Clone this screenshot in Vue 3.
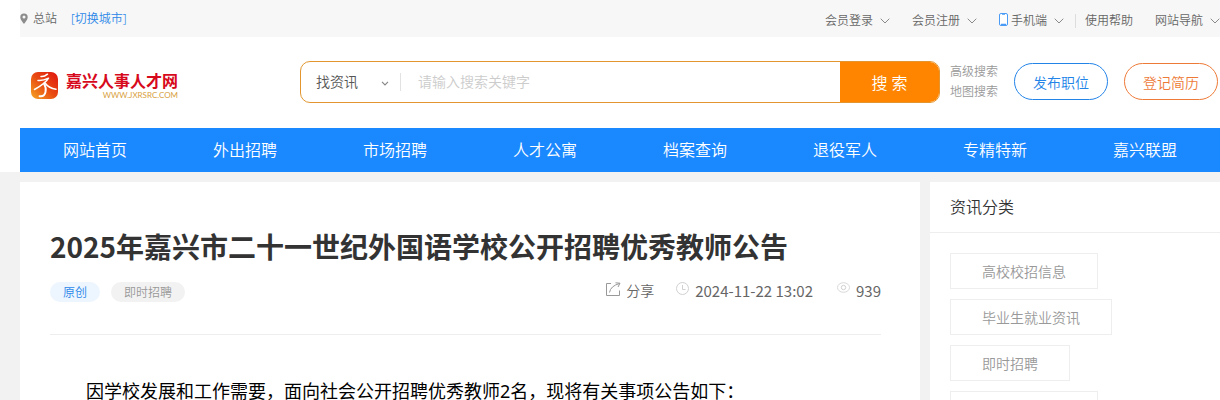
<template>
  <div class="page">
    <div class="top-area">
      <div class="topbar">
        <div class="site">
          <svg class="pin" width="8" height="11" viewBox="0 0 8 11">
            <path fill="#8c8c8c" fill-rule="evenodd" d="M4 0.5a3.7 3.7 0 0 0-3.7 3.7C0.3 6.8 4 10.8 4 10.8S7.7 6.8 7.7 4.2A3.7 3.7 0 0 0 4 0.5zM4 2.6a1.5 1.5 0 1 1 0 3 1.5 1.5 0 0 1 0-3z" />
          </svg>
          <span>总站</span>
          <a href="#" class="switch">[切换城市]</a>
        </div>
        <div class="links">
          <a v-for="item in topLinks" :key="item.name" href="#" :class="item.type">
            <svg v-if="item.type === 'phone'" class="phone-icon" width="9" height="13" viewBox="0 0 9 13">
              <rect x="0.5" y="0.5" width="8" height="12" rx="1.5" fill="#fff" stroke="#4a9bf5" />
              <path d="M3 1h3M2 11.5h5" stroke="#4a9bf5" stroke-width="1.5" />
            </svg>
            {{ item.name }}
            <svg v-if="item.arrow" class="arrow" width="10" height="6" viewBox="0 0 10 6">
              <path d="M0.7 0.7L5 5L9.3 0.7" fill="none" stroke="#8a8a8a" />
            </svg>
          </a>
        </div>
      </div>

      <header class="header">
        <a href="#" class="logo">
          <svg width="27" height="27" viewBox="0 0 27 27">
            <defs>
              <linearGradient id="logoBg" x1="1" y1="0" x2="0" y2="1">
                <stop offset="0" stop-color="#e0140f" />
                <stop offset="0.5" stop-color="#e84a12" />
                <stop offset="1" stop-color="#f6a623" />
              </linearGradient>
            </defs>
            <rect width="27" height="27" rx="7" fill="url(#logoBg)" />
            <g fill="none" stroke="#fff" stroke-linecap="round" stroke-linejoin="round">
              <path d="M10 4.5Q13 5 16.5 2.2" stroke-width="1.5" />
              <path d="M7 8.5Q12 9 17.5 6.2Q14.5 11.5 3.5 17.5" stroke-width="1.5" />
              <path d="M13 11.5Q15.5 16 14.5 20Q13.5 25 8.5 24.2" stroke-width="1.9" />
              <path d="M14 11Q18 16.5 25 17.2" stroke-width="1.6" />
            </g>
          </svg>
          <span class="logo-text">
            <strong>嘉兴人事人才网</strong>
            <small>WWW.JXRSRC.COM</small>
          </span>
        </a>

        <form class="search" @submit.prevent>
          <div class="select-box">
            <select v-model="searchType" aria-label="搜索类型">
              <option>找资讯</option>
            </select>
            <svg class="select-arrow" width="8" height="5" viewBox="0 0 8 5">
              <path d="M1 0.8L4 3.8L7 0.8" fill="none" stroke="#888" stroke-width="1.2" />
            </svg>
          </div>
          <input v-model="keyword" type="text" placeholder="请输入搜索关键字" aria-label="请输入搜索关键字" />
          <button type="submit">搜 索</button>
        </form>

        <div class="more">
          <a href="#">高级搜索</a>
          <a href="#">地图搜索</a>
        </div>
        <div class="actions">
          <button type="button" class="post">发布职位</button>
          <button type="button" class="resume">登记简历</button>
        </div>
      </header>

      <nav class="nav">
        <a v-for="name in navs" :key="name" href="#">{{ name }}</a>
      </nav>
    </div>

    <main class="main">
      <article class="article">
        <h1>2025年嘉兴市二十一世纪外国语学校公开招聘优秀教师公告</h1>
        <div class="info">
          <div class="tags">
            <span class="tag original">原创</span>
            <span class="tag">即时招聘</span>
          </div>
          <div class="meta">
            <a href="#" class="share">
              <svg width="15" height="15" viewBox="0 0 15 15">
                <path d="M5 1.5H0.5V13.5H13.5V8.5M3.5 10.5Q4.5 4 13.5 1.5M9.5 0.8L14 1.2L12 5" fill="none" stroke="#999" />
              </svg>
              分享
            </a>
            <span class="time">
              <svg width="13" height="13" viewBox="0 0 13 13">
                <circle cx="6.5" cy="6.5" r="6" fill="none" stroke="#d0d0d0" />
                <path d="M6.5 3V7.5H9.5" fill="none" stroke="#d0d0d0" />
              </svg>
              2024-11-22 13:02
            </span>
            <span class="views">
              <svg width="13" height="11" viewBox="0 0 13 11">
                <ellipse cx="6.5" cy="5.5" rx="6" ry="4.8" fill="none" stroke="#d8d8d8" />
                <circle cx="6.5" cy="5.5" r="2.2" fill="none" stroke="#d0d0d0" />
              </svg>
              939
            </span>
          </div>
        </div>
        <p>因学校发展和工作需要，面向社会公开招聘优秀教师2名，现将有关事项公告如下：</p>
      </article>

      <aside class="side">
        <h2>资讯分类</h2>
        <ul>
          <li v-for="name in categories" :key="name"><a href="#">{{ name }}</a></li>
        </ul>
      </aside>
    </main>
  </div>
</template>

<script setup>
import { ref } from 'vue'

const searchType = ref('找资讯')
const keyword = ref('')

const topLinks = [
  { name: '会员登录', arrow: true },
  { name: '会员注册', arrow: true },
  { name: '手机端', arrow: true, type: 'phone' },
  { name: '使用帮助', type: 'help' },
  { name: '网站导航', arrow: true },
]

const navs = ['网站首页', '外出招聘', '市场招聘', '人才公寓', '档案查询', '退役军人', '专精特新', '嘉兴联盟']

const categories = ['高校校招信息', '毕业生就业资讯', '即时招聘', '事业单位招聘']
</script>

<style>
body {
  margin: 0;
  background: #f2f2f2;
}
</style>

<style scoped>
.page {
  font-family: 'Noto Sans', 'Noto Sans CJK SC', sans-serif;
  font-size: 14px;
  font-weight: 350;
  color: #333;
}

.page * {
  box-sizing: border-box;
}

a {
  color: inherit;
  text-decoration: none;
}

svg {
  flex: none;
}

button,
input,
select {
  font-family: inherit;
  font-weight: inherit;
}

.top-area {
  background: #fff;
  padding-left: 20px;
}

/* 顶部条 */
.topbar {
  display: flex;
  justify-content: space-between;
  height: 37px;
  background: #f7f7f7;
  font-size: 12px;
  color: #666;
}

.site {
  display: flex;
  align-items: center;
  height: 36px;
}

.pin {
  margin-right: 5px;
}

.switch {
  margin-left: 14px;
  color: #2b87e8;
}

.links {
  display: flex;
  align-items: center;
  gap: 22px;
  padding-top: 5px;
}

.links a {
  display: flex;
  align-items: center;
  line-height: 14px;
}

.arrow {
  margin-left: 7px;
}

.phone-icon {
  margin: -4px 3px 0 0;
}

.links .help {
  border-left: 1px solid #ddd;
  padding-left: 9px;
  margin-left: -11px;
}

/* 头部搜索 */
.header {
  display: flex;
  align-items: center;
  height: 91px;
  padding: 0 2px 2px 0;
}

.logo {
  display: flex;
  align-items: center;
  gap: 8px;
  width: 280px;
  padding: 8px 0 0 11px;
}

.logo-text {
  display: flex;
  flex-direction: column;
  align-items: flex-end;
}

.logo-text strong {
  font-size: 16px;
  line-height: 18px;
  color: #d7091c;
}

.logo-text small {
  font-family: Lato, sans-serif;
  font-size: 8px;
  font-weight: 400;
  line-height: 10px;
  color: #d8a03c;
}

.search {
  flex: 1;
  display: flex;
  height: 42px;
  border: 1px solid #e39630;
  border-radius: 10px;
  overflow: hidden;
}

.select-box {
  position: relative;
  width: 100px;
}

.select-box::after {
  content: '';
  position: absolute;
  right: 0;
  top: 11px;
  height: 18px;
  border-right: 1px solid #e2e2e2;
}

.select-box select {
  width: 100%;
  height: 100%;
  padding: 0 0 0 15px;
  border: 0;
  background: none;
  appearance: none;
  font-size: 14px;
  color: #555;
}

.select-arrow {
  position: absolute;
  right: 12px;
  top: 19px;
  pointer-events: none;
}

.search input {
  flex: 1;
  min-width: 0;
  padding: 0 17px;
  border: 0;
  outline: none;
  font-size: 14px;
}

.search input::placeholder {
  color: #ccc;
}

.search button {
  width: 99px;
  border: 0;
  background: #ff8500;
  color: #fff;
  font-size: 16px;
}

.more {
  display: flex;
  flex-direction: column;
  margin: 0 16px 0 10px;
  font-size: 12px;
  line-height: 20px;
  color: #999;
}

.actions {
  display: flex;
  gap: 16px;
}

.actions button {
  width: 94px;
  height: 37px;
  padding: 0;
  border: 1px solid;
  border-radius: 19px;
  background: #fff;
  font-size: 14px;
}

.actions .post {
  color: #2384e8;
}

.actions .resume {
  color: #ee7a37;
}

/* 导航 */
.nav {
  display: grid;
  grid-template-columns: repeat(8, 1fr);
  background: #1a88ff;
}

.nav a {
  line-height: 44px;
  text-align: center;
  font-size: 16px;
  color: #fff;
}

/* 正文 */
.main {
  display: flex;
  gap: 10px;
  padding: 10px 0 0 20px;
}

.article {
  flex: 1;
  padding: 44px 39px 20px 30px;
  background: #fff;
}

h1 {
  margin: 0;
  font-family: 'Noto Sans CJK SC', sans-serif;
  font-size: 28px;
  line-height: 40px;
}

.info {
  display: flex;
  justify-content: space-between;
  height: 69px;
  padding-top: 16px;
  border-bottom: 1px solid #eee;
}

.tags {
  display: flex;
  gap: 11px;
}

.tag {
  height: 20px;
  padding: 0 13px;
  border-radius: 10px;
  background: #f2f2f2;
  font-size: 12px;
  line-height: 22px;
  color: #999;
}

.original {
  background: #edf6ff;
  color: #2b87e8;
}

.meta {
  display: flex;
  line-height: 18px;
  color: #666;
}

.meta > * {
  display: flex;
  align-items: flex-start;
}

.share {
  gap: 5px;
  margin-right: 22px;
}

.time,
.views {
  gap: 6px;
  font-family: 'Noto Sans CJK SC', sans-serif;
  font-size: 15px;
  font-weight: 400;
}

.time {
  margin-right: 24px;
}

.article p {
  margin: 0;
  padding-top: 38px;
  font-size: 18px;
  font-weight: 400;
  line-height: 36px;
  text-indent: 2em;
  color: #000;
}

/* 侧栏 */
.side {
  width: 290px;
  background: #fff;
}

.side h2 {
  margin: 0;
  padding: 0 20px;
  border-bottom: 1px solid #eee;
  font-size: 16px;
  font-weight: inherit;
  line-height: 50px;
}

.side ul {
  display: flex;
  flex-direction: column;
  align-items: flex-start;
  gap: 10px;
  margin: 0;
  padding: 20px;
  list-style: none;
}

.side a {
  display: block;
  height: 36px;
  padding: 0 31px;
  border: 1px solid #eee;
  line-height: 36px;
  color: #999;
}
</style>
